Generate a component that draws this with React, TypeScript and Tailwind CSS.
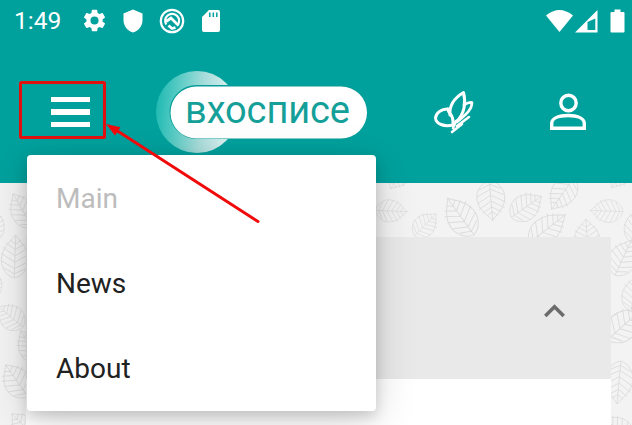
import React from "react";

type LeafSpec = { x: number; y: number; r: number; s?: number; w?: number };

const leaves: LeafSpec[] = [
  { x: 391, y: 28, r: 92, s: 0.78, w: 1.1 },
  { x: 425, y: 42, r: 45, s: 0.75, w: 1.1 },
  { x: 461, y: 34, r: -36, s: 1.1 },
  { x: 491, y: 17, r: 175, s: 0.98, w: 1.1 },
  { x: 526, y: 24, r: 55, s: 0.9, w: 1.1 },
  { x: 563, y: 10, r: 215, s: 0.95, w: 1 },
  { x: 547, y: 46, r: 52, s: 1.1, w: 0.9 },
  { x: 587, y: 55, r: -3, s: 0.9, w: 1.1 },
  { x: 607, y: 28, r: -88, s: 0.8, w: 1.1 },
  { x: 623, y: 75, r: 25, s: 0.95, w: 1.1 },
  { x: 637, y: 42, r: 20, s: 0.9 },
  { x: 634, y: 111, r: 10, s: 0.9 },
  { x: 624, y: 142, r: 48, s: 1.1 },
  { x: 619, y: 199, r: 185, s: 1.05, w: 1 },
  { x: 618, y: 246, r: -55, s: 0.9 },
  { x: 400, y: -8, r: 215, s: 0.8 },
  { x: 621, y: -9, r: 215, s: 0.8 },
  { x: -6, y: 43, r: 5, s: 0.8 },
  { x: 23, y: 28, r: -30, s: 0.95 },
  { x: 15, y: 74, r: 2, s: 1.05, w: 1 },
  { x: -7, y: 103, r: 20, s: 0.7 },
  { x: 11, y: 134, r: -50, s: 0.78, w: 1.2 },
  { x: 30, y: 164, r: -30, s: 0.9 },
  { x: 17, y: 198, r: -35, s: 0.95, w: 1.1 },
  { x: 25, y: 244, r: -45, s: 0.9 },
];

function LeafPattern() {
  return (
    <svg className="absolute inset-0" width="632" height="242" fill="none" stroke="#dcdcdc" strokeWidth="0.85">
      {leaves.map((l, i) => {
        const s = l.s ?? 1;
        return (
          <g key={i} transform={`translate(${l.x} ${l.y}) rotate(${l.r}) scale(${s * (l.w ?? 1)} ${s})`}>
            <path d="M0-21C4-15 13-9 13 3C13 12 6 19 0 20C-6 19-13 12-13 3C-13-9-4-15 0-21Z" />
            <path d="M0-21V20M0-12L5-16M0-7L9-13M0-1L12-9M0 5L13-3M0 11L13 4M0 16L10 11M0-12L-5-16M0-7L-9-13M0-1L-12-9M0 5L-13-3M0 11L-13 4M0 16L-10 11" />
          </g>
        );
      })}
    </svg>
  );
}

function StatusBar() {
  return (
    <div className="flex h-[41px] items-center pl-[14px] pr-[8px]">
      <span className="w-[66px] pt-px text-[24.5px] leading-none">1:49</span>
      <svg className="ml-[0.5px]" width="27" height="27" viewBox="0 0 24 24" fill="currentColor">
        <path d="M19.14 12.94c.04-.3.06-.61.06-.94s-.02-.64-.07-.94l2.03-1.58c.18-.14.23-.41.12-.61l-1.92-3.32c-.12-.22-.37-.29-.59-.22l-2.39.96c-.5-.38-1.03-.7-1.62-.94l-.36-2.54A.48.48 0 0 0 13.92 2.4h-3.84c-.24 0-.43.17-.47.41l-.36 2.54c-.59.24-1.13.57-1.62.94l-2.39-.96c-.22-.08-.47 0-.59.22L2.74 8.87c-.12.21-.08.47.12.61l2.03 1.58c-.05.3-.09.63-.09.94s.02.64.07.94l-2.03 1.58c-.18.14-.23.41-.12.61l1.92 3.32c.12.22.37.29.59.22l2.39-.96c.5.38 1.03.7 1.62.94l.36 2.54c.05.24.24.41.48.41h3.84c.24 0 .44-.17.47-.41l.36-2.54c.59-.24 1.13-.56 1.62-.94l2.39.96c.22.08.47 0 .59-.22l1.92-3.32c.12-.22.07-.47-.12-.61zM12 15.6A3.6 3.6 0 1 1 12 8.4a3.6 3.6 0 0 1 0 7.2z" />
      </svg>
      <svg className="ml-[15.5px]" width="20" height="24" viewBox="0 0 20 24" fill="currentColor">
        <path d="M10 0.5L19.5 4.5V11C19.5 17 15.5 22 10 23.5C4.500 22 0.500 17 0.500 11V4.500Z" />
      </svg>
      <svg className="ml-[16px]" width="26" height="26" viewBox="0 0 26 26" fill="none" stroke="currentColor" strokeWidth="2.200">
        <circle cx="13" cy="13" r="11.200" />
        <path d="M7.200 16.500A7 7 0 1 1 18.500 17.300" />
        <path d="M7 13.500L12 10L19.500 17.500M9.500 17.500L13 20.500L16.500 19.500" strokeWidth="2.800" />
      </svg>
      <svg className="ml-[17px]" width="18" height="24" viewBox="0 0 18 24">
        <path fill="currentColor" d="M7 1H16Q18 1 18 3V21Q18 23 16 23H2Q0 23 0 21V8Z" />
        <path stroke="#00a19d" strokeWidth="1.500" d="M7.800 3.500V8M11.300 3.500V8M14.800 3.500V8" />
      </svg>
      <svg className="ml-auto" width="27" height="24" viewBox="0 0 27 24" fill="currentColor">
        <path d="M0 6.500Q13.500-4.500 27 6.500L13.500 23Z" />
      </svg>
      <svg className="ml-[2px]" width="23" height="24" viewBox="0 0 23 24">
        <path fill="currentColor" d="M22.500 1V23.500H0Z" />
        <path fill="#00a19d" d="M20.300 9.500V21H12.500V13Z" />
      </svg>
      <svg className="ml-[11.500px] mr-[-0.500px]" width="15" height="24" viewBox="0 0 15 24" fill="currentColor">
        <path d="M4.500 0.500H10.500V3H13.500Q14.500 3 14.500 4V22.500Q14.500 23.500 13.500 23.500H1.500Q0.500 23.500 0.500 22.500V4Q0.500 3 1.500 3H4.500Z" />
      </svg>
    </div>
  );
}

function Logo() {
  return (
    <svg className="ml-[65px]" width="214" height="84" viewBox="0 0 214 84">
      <defs>
        <linearGradient id="moon" x1="0" x2="1" y1="0.400" y2="0.500">
          <stop offset="0" stopColor="#1fb9b2" />
          <stop offset="0.200" stopColor="#4cc8c1" />
          <stop offset="0.550" stopColor="#a5dcda" />
          <stop offset="0.850" stopColor="#d4eeee" />
        </linearGradient>
        <clipPath id="moonClip"><path d="M0 0H62L76 15V69L62 84H0Z" /></clipPath>
      </defs>
      <circle cx="42" cy="42" r="41" fill="url(#moon)" clipPath="url(#moonClip)" />
      <rect x="14.500" y="15" width="198" height="54" rx="27" fill="#079c98" />
      <rect x="15.500" y="16.500" width="196.500" height="52" rx="26" fill="white" />
      <text x="30" y="52.500" fill="#159f99" fontFamily="Roboto, sans-serif" fontSize="38" textLength="165">вхосписе</text>
    </svg>
  );
}

function Toolbar() {
  return (
    <div className="flex h-[142px] items-center">
      <div className="ml-[51px] flex w-[39px] flex-col gap-[7px]">
        <div className="h-[5.500px] bg-white" />
        <div className="h-[5.500px] bg-white" />
        <div className="h-[5.500px] bg-white" />
      </div>
      <Logo />
      <svg className="ml-[64px]" width="42" height="44" viewBox="0 0 42 44" fill="none" stroke="currentColor" strokeWidth="3" strokeLinejoin="round" strokeLinecap="round">
        <path d="M17 25C16 14 23 7 30.500 2.500C33 12 32 24 23 32" />
        <path d="M15 19C8 19 3 23 2.500 28C3 34 11 37 20 35" />
        <path d="M15 19C15 24 21 24 20 34" />
        <path d="M31 15C34 13 37 12 39 12.500C39 19 34 24 24 32" strokeWidth="2.600" />
        <path d="M36 27L24 36M29 34L19 42M23 31L20 38" strokeWidth="2.600" />
      </svg>
      <svg className="ml-[74px]" width="38" height="38" viewBox="0 0 38 38" fill="none" stroke="currentColor" strokeWidth="3.400">
        <circle cx="19.500" cy="10" r="7.700" />
        <path d="M2.700 35.300V30.500C2.700 25 10 22.500 19 22.500S35.300 25 35.300 30.500V35.300Z" />
      </svg>
    </div>
  );
}

function NavMenu() {
  return (
    <nav className="absolute left-[27px] top-[155px] h-[256px] w-[349px] rounded-[4px] bg-white text-[28px] text-[#212121] shadow-[0_5px_14px_rgba(0,0,0,0.16),0_8px_42px_rgba(0,0,0,0.16)]">
      <ul className="flex h-full flex-col pl-[29px]">
        <li className="flex flex-1 items-center pt-[2px] text-[#bcbcbc]">Main</li>
        <li className="flex flex-1 items-center pt-[2px]">News</li>
        <li className="flex flex-1 items-center pt-[2px]">About</li>
      </ul>
    </nav>
  );
}

export default function App() {
  return (
    <div className="relative h-[425px] w-[632px] overflow-hidden bg-[#f3f3f3] font-['Roboto',sans-serif]">
      <header className="h-[183px] bg-[#00a19d] text-white">
        <StatusBar />
        <Toolbar />
      </header>
      <main className="relative h-[242px] overflow-hidden pl-[26px] pr-[21px] pt-[54px]">
        <LeafPattern />
        <section className="relative">
          <div className="flex h-[142px] items-center justify-end bg-[#e9e9e9] pr-[46px]">
            <svg width="21" height="14" viewBox="0 0 21 14" className="mt-[5px]" fill="none" stroke="#6b6b6b" strokeWidth="3.500">
              <path d="M1.300 12L10.500 2.700L19.700 12" />
            </svg>
          </div>
          <div className="flex h-[90px] justify-end bg-white pr-[36px] pt-[41px] text-[24px] font-medium leading-[28px] tracking-[0.600px] text-[#159f99]">
            ALL NEWS
          </div>
        </section>
      </main>
      <NavMenu />
      <svg className="absolute left-0 top-0" width="632" height="425" fill="none">
        <rect x="20.500" y="82.500" width="84" height="55" rx="1" stroke="#e0100f" strokeWidth="3" />
        <path d="M258 221.500L116 130" stroke="#f00a0a" strokeWidth="3" strokeLinecap="round" />
        <path d="M106 124L120.500 127.200L115 135.500Z" fill="#f00a0a" />
      </svg>
    </div>
  );
}
